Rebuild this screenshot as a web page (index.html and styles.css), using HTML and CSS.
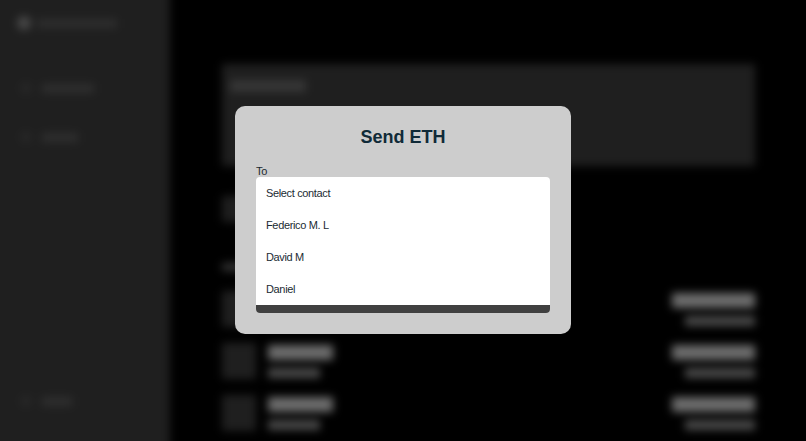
FILE: index.html
```html
<!DOCTYPE html>
<html lang="en">
<head>
<meta charset="utf-8">
<title>Send ETH</title>
<link rel="stylesheet" href="styles.css">
</head>
<body>
<div class="app">
  <aside class="sidebar">
    <div class="brand"><span class="brand-dot"></span><span class="brand-name"></span></div>
    <nav class="nav">
      <div class="nav-item"><span class="nav-icon"></span><span class="nav-label w52"></span></div>
      <div class="nav-item"><span class="nav-icon"></span><span class="nav-label w36"></span></div>
    </nav>
    <div class="nav-item nav-bottom"><span class="nav-icon"></span><span class="nav-label w30"></span></div>
  </aside>
  <main class="main">
    <section class="balance"><span class="balance-title"></span></section>
    <section class="actions"><span class="action"></span></section>
    <div class="section-title"></div>
    <div class="row">
      <span class="token"></span>
      <div class="col"><span class="line-a"></span><span class="line-b"></span></div>
      <div class="col right"><span class="line-c"></span><span class="line-d"></span></div>
    </div>
    <div class="row">
      <span class="token"></span>
      <div class="col"><span class="line-a"></span><span class="line-b"></span></div>
      <div class="col right"><span class="line-c"></span><span class="line-d"></span></div>
    </div>
    <div class="row">
      <span class="token"></span>
      <div class="col"><span class="line-a"></span><span class="line-b"></span></div>
      <div class="col right"><span class="line-c"></span><span class="line-d"></span></div>
    </div>
  </main>
</div>
<div class="overlay">
  <div class="modal">
    <h1 class="modal-title">Send ETH</h1>
    <div class="field-label">To</div>
    <div class="select">
      <div class="option">Select contact</div>
      <div class="option">Federico M. L</div>
      <div class="option">David M</div>
      <div class="option">Daniel</div>
      <div class="select-foot"></div>
    </div>
  </div>
</div>
</body>
</html>
```
FILE: styles.css
```css
* { box-sizing: border-box; }
html, body { margin: 0; height: 100%; background: #000; overflow: hidden; }
body { font-family: "Liberation Sans", Arial, sans-serif; }

.app {
  display: flex;
  margin: -12px;
  height: calc(100vh + 24px);
  filter: blur(4.5px);
  overflow: hidden;
}
.sidebar {
  width: 182px;
  flex: none;
  background: #1f1f1f;
  display: flex;
  flex-direction: column;
  padding: 27px 0 0 29px;
}
.brand { display: flex; align-items: center; gap: 6px; height: 16px; }
.brand-dot { width: 14px; height: 14px; border-radius: 50%; background: #484848; }
.brand-name { width: 80px; height: 9px; background: #2e2e2e; }
.nav { margin-top: 49px; display: flex; flex-direction: column; gap: 33px; padding-left: 3px; }
.nav-item { display: flex; align-items: center; gap: 10px; height: 16px; }
.nav-icon { width: 12px; height: 12px; border-radius: 50%; background: #272727; }
.nav-label { height: 9px; background: #2f2f2f; }
.w52 { width: 52px; }
.w36 { width: 36px; }
.w30 { width: 30px; }
.nav-bottom { margin-top: auto; margin-bottom: 44px; margin-left: 3px; }

.main { flex: 1; min-width: 0; padding: 76px 63px 0 52px; display: flex; flex-direction: column; }
.balance { height: 102px; flex: none; background: #1f1f1f; padding: 16px 8px; }
.balance-title { display: block; width: 76px; height: 12px; background: #363636; }
.actions { height: 72px; flex: none; padding-top: 30px; }
.action { display: block; width: 60px; height: 26px; background: #1e1e1e; }
.section-title { width: 40px; height: 8px; background: #333; margin: 25px 0 22px; flex: none; }
.row { display: flex; align-items: flex-start; height: 52px; flex: none; }
.token { width: 34px; height: 36px; margin-top: -2px; background: #1f1f1f; flex: none; }
.col { display: flex; flex-direction: column; gap: 8px; margin-left: 12px; }
.right { margin-left: auto; align-items: flex-end; }
.line-a { width: 65px; height: 15px; background: #6c6c6c; }
.line-b { width: 52px; height: 10px; background: #4a4a4a; }
.line-c { width: 83px; height: 15px; background: #6c6c6c; }
.line-d { width: 70px; height: 10px; background: #4a4a4a; }

.overlay { position: fixed; inset: 0 0 1px; display: flex; align-items: center; justify-content: center; }
.modal { width: 336px; height: 228px; background: #cdcdcd; border-radius: 10px; padding: 20px 21px 21px; }
.modal-title { margin: 0 0 16px; font-size: 18px; line-height: 23px; font-weight: 700; text-align: center; color: #102a38; }
.field-label { font-size: 11px; line-height: 12px; letter-spacing: -0.3px; color: #1c2a30; }
.select { background: #fff; border-radius: 4px; overflow: hidden; }
.option { height: 32px; padding: 0 10px; font-size: 11px; line-height: 32px; letter-spacing: -0.35px; color: #1b2b33; }
.select-foot { height: 8px; background: #404040; }
```
